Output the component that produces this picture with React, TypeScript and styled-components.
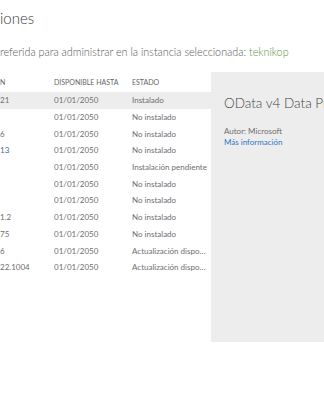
import React from 'react';
import styled, { createGlobalStyle } from 'styled-components';

const Global = createGlobalStyle`
  html, body { margin: 0; padding: 0; background: #fff; overflow: hidden; }
  body { font-family: Lato, "Open Sans", sans-serif; }
`;

const Page = styled.div`
  width: 324px;
  height: 400px;
  overflow: hidden;
  display: flex;
  flex-direction: column;
`;

const Title = styled.h1`
  margin: 0;
  padding: 9px 0 0 0;
  font-size: 15px;
  font-weight: 300;
  line-height: 18px;
  color: #3a3a3a;
  white-space: nowrap;
`;

const Subtitle = styled.p`
  margin: 18px 0 0 0;
  font-size: 10.8px;
  font-weight: 300;
  line-height: 14px;
  color: #555;
  white-space: nowrap;
`;

const Instance = styled.span`
  color: #5e8f45;
`;

const Main = styled.div`
  margin-top: 13px;
  display: flex;
  align-items: flex-start;
`;

const Table = styled.div`
  width: 211px;
  display: flex;
  flex-direction: column;
`;

const Row = styled.div<{ $selected?: boolean; $header?: boolean }>`
  display: grid;
  grid-template-columns: 54px 78px 79px;
  height: ${(p) => (p.$header ? '20px' : '16.7px')};
  align-items: center;
  background: ${(p) => (p.$selected ? '#ededed' : 'transparent')};
  font-size: ${(p) => (p.$header ? '7px' : '8px')};
  text-transform: ${(p) => (p.$header ? 'uppercase' : 'none')};
  color: ${(p) => (p.$header ? '#666' : '#6e6e6e')};
`;

const Cell = styled.div<{ $link?: boolean }>`
  white-space: nowrap;
  overflow: hidden;
  text-overflow: ellipsis;
  padding-right: 2px;
  color: ${(p) => (p.$link ? '#4a6f99' : 'inherit')};
`;

const Panel = styled.div`
  flex: 1;
  height: 270px;
  background: #ededed;
  padding: 22px 0 0 13px;
  box-sizing: border-box;
  display: flex;
  flex-direction: column;
  overflow: hidden;
`;

const PanelTitle = styled.div`
  font-size: 13.5px;
  font-weight: 300;
  line-height: 18px;
  color: #444;
  white-space: nowrap;
`;

const Meta = styled.div`
  margin-top: 13.5px;
  font-size: 8px;
  line-height: 11px;
  color: #6e6e6e;
`;

const Link = styled.a`
  font-size: 8px;
  line-height: 11px;
  color: #2f76c5;
  text-decoration: none;
`;

type Item = { v: string; date: string; state: string; link?: boolean };

const rows: Item[] = [
  { v: '21', date: '01/01/2050', state: 'Instalado' },
  { v: '', date: '01/01/2050', state: 'No instalado' },
  { v: '6', date: '01/01/2050', state: 'No instalado' },
  { v: '13', date: '01/01/2050', state: 'No instalado', link: true },
  { v: '', date: '01/01/2050', state: 'Instalación pendiente' },
  { v: '', date: '01/01/2050', state: 'No instalado' },
  { v: '', date: '01/01/2050', state: 'No instalado' },
  { v: '1.2', date: '01/01/2050', state: 'No instalado' },
  { v: '75', date: '01/01/2050', state: 'No instalado' },
  { v: '6', date: '01/01/2050', state: 'Actualización disponible' },
  { v: '22.1004', date: '01/01/2050', state: 'Actualización disponible' },
];

export default function App() {
  return (
    <Page>
      <Global />
      <Title>iones</Title>
      <Subtitle>
        referida para administrar en la instancia seleccionada: <Instance>teknikop</Instance>
      </Subtitle>
      <Main>
        <Table>
          <Row $header>
            <Cell>N</Cell>
            <Cell>Disponible hasta</Cell>
            <Cell>Estado</Cell>
          </Row>
          {rows.map((r, i) => (
            <Row key={i} $selected={i === 0}>
              <Cell $link={r.link}>{r.v}</Cell>
              <Cell>{r.date}</Cell>
              <Cell>{r.state}</Cell>
            </Row>
          ))}
        </Table>
        <Panel>
          <PanelTitle>OData v4 Data Provider</PanelTitle>
          <Meta>Autor: Microsoft</Meta>
          <Link href="#">Más información</Link>
        </Panel>
      </Main>
    </Page>
  );
}
